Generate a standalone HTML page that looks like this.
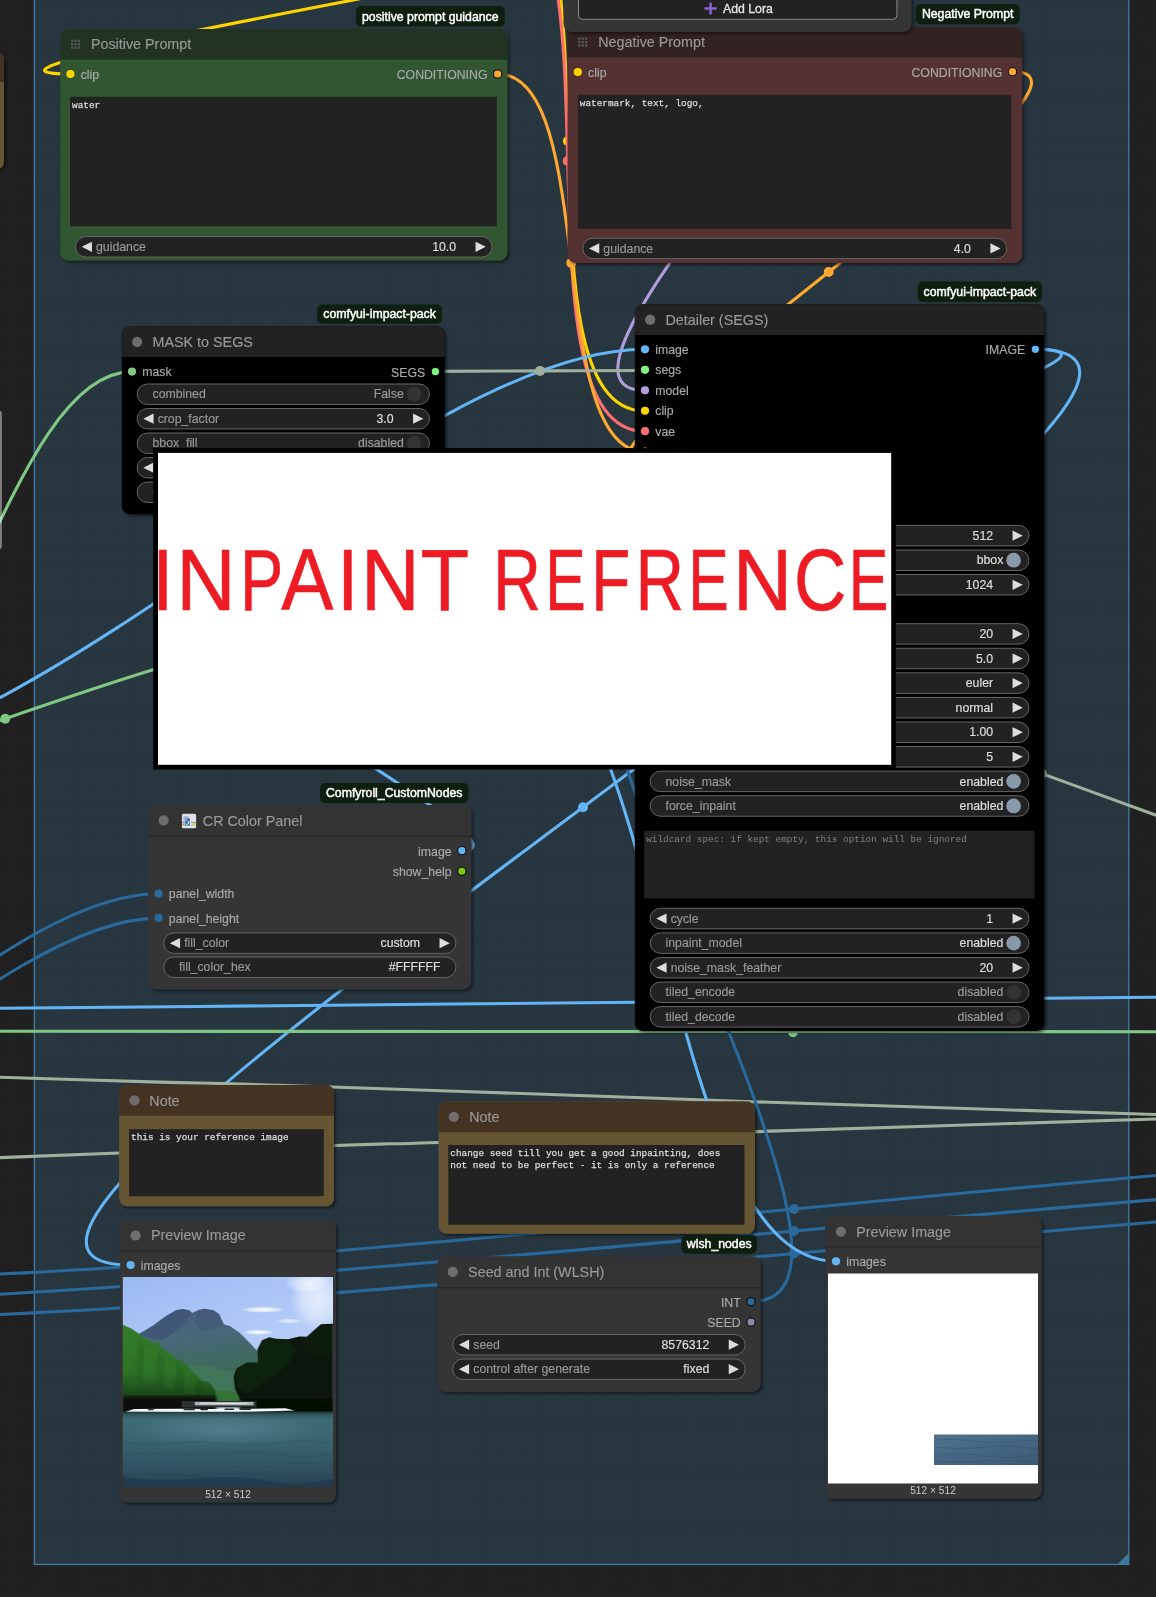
<!DOCTYPE html>
<html lang="en"><head><meta charset="utf-8"><title>ComfyUI</title>
<style>
html,body{margin:0;padding:0;background:#212121;}
body{width:1156px;height:1597px;overflow:hidden;position:relative;font-family:'Liberation Sans', Arial, sans-serif;}
svg{display:block;position:absolute;left:0;top:0;will-change:transform;}
text{white-space:pre;}
</style></head><body>
<svg width="1156" height="1597" viewBox="0 0 1156 1597">
<defs>
<filter id="sh" x="-5%" y="-5%" width="112%" height="112%"><feDropShadow dx="2" dy="2" stdDeviation="1.5" flood-color="#000" flood-opacity="0.5"/></filter>
<pattern id="grid" x="6.6" y="0.1" width="10.2" height="10.2" patternUnits="userSpaceOnUse"><rect width="10.2" height="10.2" fill="#212121"/><rect width="1" height="10.2" fill="#1e1e1e"/><rect width="10.2" height="1" fill="#1e1e1e"/></pattern>
<linearGradient id="strip" x1="0" y1="0" x2="1" y2="1"><stop offset="0" stop-color="#4f7392"/><stop offset="1" stop-color="#3c5a73"/></linearGradient>
</defs>
<rect width="1156" height="1597" fill="url(#grid)"/>

<rect x="34.4" y="-20" width="1094.4" height="1584.4" fill="#3f789e" fill-opacity="0.25" stroke="#3f789e" stroke-width="1.4"/>
<path d="M1128.8,1564.4 L1117.3,1564.4 L1128.8,1552.9 Z" fill="#3f789e"/>
<path d="M947.6,-133 C1172.9,-133 -154.9,74 70.4,74" fill="none" stroke="#FFD500" stroke-width="3.07"/>
<path d="M1012.5,71.7 C1148.4,71.7 509.1,472.3 645,472.3" fill="none" stroke="#FFA931" stroke-width="3.07"/>
<circle cx="828.7" cy="272" r="5" fill="#FFA931"/>
<path d="M490.8,-129 C631.2,-129 504.6,411 645,411" fill="none" stroke="#FFD500" stroke-width="3.07"/>
<circle cx="567.9" cy="141" r="5" fill="#FFD500"/>
<path d="M490.4,-109.4 C631,-109.4 504.4,431.4 645,431.4" fill="none" stroke="#FF6E6E" stroke-width="3.07"/>
<circle cx="567.7" cy="161" r="5" fill="#FF6E6E"/>
<path d="M497.7,74 C599.1,74 543.6,451.8 645,451.8" fill="none" stroke="#FFA931" stroke-width="3.07"/>
<circle cx="571.3" cy="262.9" r="5" fill="#FFA931"/>
<path d="M935.9,-183 C1096.7,-183 484.2,390.5 645,390.5" fill="none" stroke="#B39DDB" stroke-width="3.07"/>
<path d="M1035.4,349.3 C1257.5,349.3 -22.1,651 200,651" fill="none" stroke="#64B5F6" stroke-width="3.07"/>
<path d="M-188.4,757.6 C43.6,757.6 413,349.3 645,349.3" fill="none" stroke="#64B5F6" stroke-width="3.07"/>
<path d="M435,371.4 C452.5,371.32 505,371.05 540,370.9 C575,370.75 627.5,370.57 645,370.5" fill="none" stroke="#9FB09D" stroke-width="3.07" stroke-linecap="butt"/>
<circle cx="540" cy="370.9" r="5" fill="#9FB09D"/>
<path d="M-177,766.4 C-51.7,766.4 6.7,371.6 132,371.6" fill="none" stroke="#81C784" stroke-width="3.07"/>
<path d="M-335.6,805.9 C-159.7,805.9 170.1,631.5 346,631.5" fill="none" stroke="#81C784" stroke-width="3.07"/>
<circle cx="5.2" cy="718.7" r="5" fill="#81C784"/>
<path d="M1035.4,349.3 C1357.2,349.3 -191.2,1265 130.6,1265" fill="none" stroke="#64B5F6" stroke-width="3.07"/>
<circle cx="583" cy="807.2" r="5" fill="#64B5F6"/>
<path d="M461.8,850.6 C547.5,850.6 114.3,629 200,629" fill="none" stroke="#64B5F6" stroke-width="3.07"/>
<path d="M-5,1008.3 C50.83,1007.78 223.42,1006.22 330,1005.2 C436.58,1004.18 515.33,1003.35 634.5,1002.2 C753.67,1001.05 957.42,999.13 1045,998.3 C1132.58,997.47 1140.83,997.38 1160,997.2" fill="none" stroke="#64B5F6" stroke-width="3.07" stroke-linecap="butt"/>
<path d="M-5,1031.3 C189.17,1031.37 965.83,1031.63 1160,1031.7" fill="none" stroke="#81C784" stroke-width="3.07" stroke-linecap="butt"/>
<circle cx="793" cy="1032.2" r="5" fill="#81C784"/>
<path d="M-5,1077.1 C22.5,1077.93 112.58,1080.73 160,1082.1 C207.42,1083.47 197.83,1082.65 279.5,1085.3 C361.17,1087.95 571.32,1095.27 650,1098 C728.68,1100.73 666.6,1098.92 751.6,1101.7 C836.6,1104.48 1091.93,1112.53 1160,1114.7" fill="none" stroke="#9FB09D" stroke-width="3.07" stroke-linecap="butt"/>
<path d="M-5,1157.8 C15.62,1157 62.2,1155.05 118.7,1153 C175.2,1150.95 288.78,1147.03 334,1145.5 C379.22,1143.97 372.67,1144.3 390,1143.8 C407.33,1143.3 377,1144.53 438,1142.5 C499,1140.47 635.67,1135.53 756,1131.6 C876.33,1127.67 1092.67,1121.02 1160,1118.9" fill="none" stroke="#9FB09D" stroke-width="3.07" stroke-linecap="butt"/>
<path d="M-467.2,1244.2 C-287.9,1244.2 -20.7,893.8 158.6,893.8" fill="none" stroke="#29699C" stroke-width="3.07"/>
<path d="M-423.6,1224.8 C-259,1224.8 -5.9,918.1 158.6,918.1" fill="none" stroke="#29699C" stroke-width="3.07"/>
<path d="M751,1301.7 C926.2,1301.7 469.8,609 645,609" fill="none" stroke="#29699C" stroke-width="3.07"/>
<path d="M-188.4,1279.3 C304.1,1279.3 1283.9,1138.7 1776.4,1138.7" fill="none" stroke="#29699C" stroke-width="3.07"/>
<circle cx="794" cy="1209" r="5" fill="#29699C"/>
<path d="M-332.6,1306 C232,1306 1356,1156 1920.6,1156" fill="none" stroke="#29699C" stroke-width="3.07"/>
<circle cx="794" cy="1231" r="5" fill="#29699C"/>
<path d="M-195.8,1319.8 C300.2,1319.8 1287.8,1187.2 1783.8,1187.2" fill="none" stroke="#29699C" stroke-width="3.07"/>
<circle cx="794" cy="1253.5" r="5" fill="#29699C"/>
<path d="M1025,767 C1027.83,768.1 1038.72,772.33 1042,773.6 C1045.28,774.87 1025.7,767.67 1044.7,774.6 C1063.7,781.53 1135.12,807.58 1156,815.2 C1176.88,822.82 1167.67,819.45 1170,820.3" fill="none" stroke="#9FB09D" stroke-width="3.07" stroke-linecap="butt"/>
<circle cx="1042" cy="773.8" r="5" fill="#9FB09D"/>
<path d="M487.5,626 C668.7,626 654.8,1261.3 836,1261.3" fill="none" stroke="#64B5F6" stroke-width="3.07"/>
<g filter="url(#sh)"><path d="M-51.81,51.4 H-4.19 A8.19,8.19 0 0 1 4,59.59 V161.81 A8.19,8.19 0 0 1 -4.19,170 H-51.81 A8.19,8.19 0 0 1 -60,161.81 V59.59 A8.19,8.19 0 0 1 -51.81,51.4 Z" fill="#665533"/></g>
<path d="M-51.81,51.4 H-4.19 A8.19,8.19 0 0 1 4,59.59 V82.12 H-60 V59.59 A8.19,8.19 0 0 1 -51.81,51.4 Z" fill="#443322"/>
<rect x="-10" y="410.8" width="11.9" height="138.2" rx="2.5" fill="#fff" fill-opacity="0.42"/>
<g filter="url(#sh)"><path d="M68.39,29 H499.11 A8.19,8.19 0 0 1 507.3,37.19 V252.43 A8.19,8.19 0 0 1 499.11,260.62 H68.39 A8.19,8.19 0 0 1 60.2,252.43 V37.19 A8.19,8.19 0 0 1 68.39,29 Z" fill="#335533"/></g>
<path d="M68.39,29 H499.11 A8.19,8.19 0 0 1 507.3,37.19 V59.72 H60.2 V37.19 A8.19,8.19 0 0 1 68.39,29 Z" fill="#223322"/>
<rect x="70.96" y="39.76" width="2.2" height="2.2" fill="#5a5a5a"/>
<rect x="70.96" y="43.16" width="2.2" height="2.2" fill="#5a5a5a"/>
<rect x="70.96" y="46.56" width="2.2" height="2.2" fill="#5a5a5a"/>
<rect x="74.36" y="39.76" width="2.2" height="2.2" fill="#5a5a5a"/>
<rect x="74.36" y="43.16" width="2.2" height="2.2" fill="#5a5a5a"/>
<rect x="74.36" y="46.56" width="2.2" height="2.2" fill="#5a5a5a"/>
<rect x="77.76" y="39.76" width="2.2" height="2.2" fill="#5a5a5a"/>
<rect x="77.76" y="43.16" width="2.2" height="2.2" fill="#5a5a5a"/>
<rect x="77.76" y="46.56" width="2.2" height="2.2" fill="#5a5a5a"/>
<text x="90.92" y="49.48" font-family="'Liberation Sans', Arial, sans-serif" font-size="14.34" fill="#999" stroke="#999" stroke-width="0.15">Positive Prompt</text>
<circle cx="70.4" cy="74" r="4.1" fill="#FFD500"/>
<text x="80.64" y="78.7" font-family="'Liberation Sans', Arial, sans-serif" font-size="12.29" fill="#AAA" stroke="#AAA" stroke-width="0.15">clip</text>
<circle cx="497.7" cy="74" r="4.1" fill="#FFA931" stroke="#000" stroke-width="1"/>
<text x="487.46" y="79.1" text-anchor="end" font-family="'Liberation Sans', Arial, sans-serif" font-size="12.29" fill="#AAA" stroke="#AAA" stroke-width="0.15">CONDITIONING</text>
<rect x="70" y="96.8" width="426.8" height="129.5" fill="#222"/>
<text x="72" y="107.7" font-family="'Liberation Mono', 'DejaVu Sans Mono', monospace" font-size="9.4" fill="#ddd" stroke="#ddd" stroke-width="0.25" xml:space="preserve">water</text>
<rect x="75.56" y="236.6" width="416.38" height="20.48" rx="10.24" fill="#222" stroke="#666" stroke-width="1"/>
<path d="M91.94,241.72 L81.7,246.84 L91.94,251.96 Z" fill="#DDD"/>
<path d="M475.56,241.72 L485.8,246.84 L475.56,251.96 Z" fill="#DDD"/>
<text x="96.04" y="250.94" font-family="'Liberation Sans', Arial, sans-serif" font-size="12.29" fill="#999" stroke="#999" stroke-width="0.15">guidance</text>
<text x="456.1" y="250.94" text-anchor="end" font-family="'Liberation Sans', Arial, sans-serif" font-size="12.29" fill="#DDD" stroke="#DDD" stroke-width="0.2">10.0</text>
<rect x="355.8" y="6" width="149" height="20.6" rx="5" fill="#0F1F0F"/>
<text x="430.3" y="20.7" text-anchor="middle" font-family="'Liberation Sans', Arial, sans-serif" font-size="12.29" fill="#fff" stroke="#fff" stroke-width="0.45">positive prompt guidance</text>
<g filter="url(#sh)"><path d="M575.69,26.8 H1013.91 A8.19,8.19 0 0 1 1022.1,34.99 V254.73 A8.19,8.19 0 0 1 1013.91,262.92 H575.69 A8.19,8.19 0 0 1 567.5,254.73 V34.99 A8.19,8.19 0 0 1 575.69,26.8 Z" fill="#553333"/></g>
<path d="M575.69,26.8 H1013.91 A8.19,8.19 0 0 1 1022.1,34.99 V57.52 H567.5 V34.99 A8.19,8.19 0 0 1 575.69,26.8 Z" fill="#332222"/>
<rect x="578.26" y="37.56" width="2.2" height="2.2" fill="#5a5a5a"/>
<rect x="578.26" y="40.96" width="2.2" height="2.2" fill="#5a5a5a"/>
<rect x="578.26" y="44.36" width="2.2" height="2.2" fill="#5a5a5a"/>
<rect x="581.66" y="37.56" width="2.2" height="2.2" fill="#5a5a5a"/>
<rect x="581.66" y="40.96" width="2.2" height="2.2" fill="#5a5a5a"/>
<rect x="581.66" y="44.36" width="2.2" height="2.2" fill="#5a5a5a"/>
<rect x="585.06" y="37.56" width="2.2" height="2.2" fill="#5a5a5a"/>
<rect x="585.06" y="40.96" width="2.2" height="2.2" fill="#5a5a5a"/>
<rect x="585.06" y="44.36" width="2.2" height="2.2" fill="#5a5a5a"/>
<text x="598.22" y="47.28" font-family="'Liberation Sans', Arial, sans-serif" font-size="14.34" fill="#999" stroke="#999" stroke-width="0.15">Negative Prompt</text>
<circle cx="577.8" cy="72" r="4.1" fill="#FFD500"/>
<text x="588.04" y="76.7" font-family="'Liberation Sans', Arial, sans-serif" font-size="12.29" fill="#AAA" stroke="#AAA" stroke-width="0.15">clip</text>
<circle cx="1012.5" cy="71.7" r="4.1" fill="#FFA931" stroke="#000" stroke-width="1"/>
<text x="1002.26" y="76.8" text-anchor="end" font-family="'Liberation Sans', Arial, sans-serif" font-size="12.29" fill="#AAA" stroke="#AAA" stroke-width="0.15">CONDITIONING</text>
<rect x="577.8" y="94.8" width="433.5" height="134.1" fill="#222"/>
<text x="579.8" y="105.7" font-family="'Liberation Mono', 'DejaVu Sans Mono', monospace" font-size="9.4" fill="#ddd" stroke="#ddd" stroke-width="0.25" xml:space="preserve">watermark, text, logo,</text>
<rect x="582.86" y="238.2" width="423.88" height="20.48" rx="10.24" fill="#222" stroke="#666" stroke-width="1"/>
<path d="M599.24,243.32 L589,248.44 L599.24,253.56 Z" fill="#DDD"/>
<path d="M990.36,243.32 L1000.6,248.44 L990.36,253.56 Z" fill="#DDD"/>
<text x="603.34" y="252.54" font-family="'Liberation Sans', Arial, sans-serif" font-size="12.29" fill="#999" stroke="#999" stroke-width="0.15">guidance</text>
<text x="970.9" y="252.54" text-anchor="end" font-family="'Liberation Sans', Arial, sans-serif" font-size="12.29" fill="#DDD" stroke="#DDD" stroke-width="0.2">4.0</text>
<rect x="915.7" y="4" width="103.9" height="20.3" rx="5" fill="#0F1F0F"/>
<text x="967.65" y="18.4" text-anchor="middle" font-family="'Liberation Sans', Arial, sans-serif" font-size="12.29" fill="#fff" stroke="#fff" stroke-width="0.45">Negative Prompt</text>
<g filter="url(#sh)"><path d="M571.69,-60 H903.21 A8.19,8.19 0 0 1 911.4,-51.81 V23.71 A8.19,8.19 0 0 1 903.21,31.9 H571.69 A8.19,8.19 0 0 1 563.5,23.71 V-51.81 A8.19,8.19 0 0 1 571.69,-60 Z" fill="#353535"/></g>
<rect x="578.5" y="-10" width="318.4" height="29.3" rx="4" fill="#222" stroke="#8a8a8a" stroke-width="1"/>
<path d="M710.6,2.4 V14.6 M704.5,8.5 H716.7" stroke="#8a63d2" stroke-width="2.4" fill="none"/>
<text x="723" y="12.8" font-family="'Liberation Sans', Arial, sans-serif" font-size="12.29" fill="#e6e6e6" stroke="#e6e6e6" stroke-width="0.3">Add Lora</text>
<g filter="url(#sh)"><path d="M129.99,326.4 H436.61 A8.19,8.19 0 0 1 444.8,334.59 V506.03 A8.19,8.19 0 0 1 436.61,514.22 H129.99 A8.19,8.19 0 0 1 121.8,506.03 V334.59 A8.19,8.19 0 0 1 129.99,326.4 Z" fill="#000"/></g>
<path d="M129.99,326.4 H436.61 A8.19,8.19 0 0 1 444.8,334.59 V357.12 H121.8 V334.59 A8.19,8.19 0 0 1 129.99,326.4 Z" fill="#222"/>
<circle cx="137.16" cy="341.76" r="5.12" fill="#6e6e6e"/>
<text x="152.52" y="346.88" font-family="'Liberation Sans', Arial, sans-serif" font-size="14.34" fill="#999" stroke="#999" stroke-width="0.15">MASK to SEGS</text>
<circle cx="132" cy="371.6" r="4.1" fill="#81C784"/>
<text x="142.24" y="376.3" font-family="'Liberation Sans', Arial, sans-serif" font-size="12.29" fill="#AAA" stroke="#AAA" stroke-width="0.15">mask</text>
<circle cx="435.4" cy="371.6" r="4.1" fill="#7CF77C" stroke="#000" stroke-width="1"/>
<text x="425.16" y="376.7" text-anchor="end" font-family="'Liberation Sans', Arial, sans-serif" font-size="12.29" fill="#AAA" stroke="#AAA" stroke-width="0.15">SEGS</text>
<rect x="137.16" y="384" width="292.28" height="20.48" rx="10.24" fill="#222" stroke="#666" stroke-width="1"/>
<text x="152.52" y="398.34" font-family="'Liberation Sans', Arial, sans-serif" font-size="12.29" fill="#999" stroke="#999" stroke-width="0.15">combined</text>
<circle cx="414.08" cy="394.24" r="7.37" fill="#333"/>
<text x="403.84" y="398.34" text-anchor="end" font-family="'Liberation Sans', Arial, sans-serif" font-size="12.29" fill="#999" stroke="#999" stroke-width="0.2">False</text>
<rect x="137.16" y="408.5" width="292.28" height="20.48" rx="10.24" fill="#222" stroke="#666" stroke-width="1"/>
<path d="M153.54,413.62 L143.3,418.74 L153.54,423.86 Z" fill="#DDD"/>
<path d="M413.06,413.62 L423.3,418.74 L413.06,423.86 Z" fill="#DDD"/>
<text x="157.64" y="422.84" font-family="'Liberation Sans', Arial, sans-serif" font-size="12.29" fill="#999" stroke="#999" stroke-width="0.15">crop_factor</text>
<text x="393.6" y="422.84" text-anchor="end" font-family="'Liberation Sans', Arial, sans-serif" font-size="12.29" fill="#DDD" stroke="#DDD" stroke-width="0.2">3.0</text>
<rect x="137.16" y="433" width="292.28" height="20.48" rx="10.24" fill="#222" stroke="#666" stroke-width="1"/>
<text x="152.52" y="447.34" font-family="'Liberation Sans', Arial, sans-serif" font-size="12.29" fill="#999" stroke="#999" stroke-width="0.15">bbox_fill</text>
<circle cx="414.08" cy="443.24" r="7.37" fill="#333"/>
<text x="403.84" y="447.34" text-anchor="end" font-family="'Liberation Sans', Arial, sans-serif" font-size="12.29" fill="#999" stroke="#999" stroke-width="0.2">disabled</text>
<rect x="137.16" y="457.5" width="292.28" height="20.48" rx="10.24" fill="#222" stroke="#666" stroke-width="1"/>
<path d="M153.54,462.62 L143.3,467.74 L153.54,472.86 Z" fill="#DDD"/>
<path d="M413.06,462.62 L423.3,467.74 L413.06,472.86 Z" fill="#DDD"/>
<text x="157.64" y="471.84" font-family="'Liberation Sans', Arial, sans-serif" font-size="12.29" fill="#999" stroke="#999" stroke-width="0.15">drop_size</text>
<text x="393.6" y="471.84" text-anchor="end" font-family="'Liberation Sans', Arial, sans-serif" font-size="12.29" fill="#DDD" stroke="#DDD" stroke-width="0.2">10</text>
<rect x="137.16" y="482" width="292.28" height="20.48" rx="10.24" fill="#222" stroke="#666" stroke-width="1"/>
<text x="152.52" y="496.34" font-family="'Liberation Sans', Arial, sans-serif" font-size="12.29" fill="#999" stroke="#999" stroke-width="0.15">contour_fill</text>
<circle cx="414.08" cy="492.24" r="7.37" fill="#333"/>
<text x="403.84" y="496.34" text-anchor="end" font-family="'Liberation Sans', Arial, sans-serif" font-size="12.29" fill="#999" stroke="#999" stroke-width="0.2">disabled</text>
<rect x="317.2" y="304.4" width="124.8" height="19.3" rx="5" fill="#0F1F0F"/>
<text x="379.6" y="317.8" text-anchor="middle" font-family="'Liberation Sans', Arial, sans-serif" font-size="12.29" fill="#fff" stroke="#fff" stroke-width="0.45">comfyui-impact-pack</text>
<g filter="url(#sh)"><path d="M642.99,304.2 H1036.11 A8.19,8.19 0 0 1 1044.3,312.39 V1022.93 A8.19,8.19 0 0 1 1036.11,1031.12 H642.99 A8.19,8.19 0 0 1 634.8,1022.93 V312.39 A8.19,8.19 0 0 1 642.99,304.2 Z" fill="#000"/></g>
<path d="M642.99,304.2 H1036.11 A8.19,8.19 0 0 1 1044.3,312.39 V334.92 H634.8 V312.39 A8.19,8.19 0 0 1 642.99,304.2 Z" fill="#222"/>
<circle cx="650.16" cy="319.56" r="5.12" fill="#6e6e6e"/>
<text x="665.52" y="324.68" font-family="'Liberation Sans', Arial, sans-serif" font-size="14.34" fill="#999" stroke="#999" stroke-width="0.15">Detailer (SEGS)</text>
<circle cx="645" cy="349.3" r="4.1" fill="#64B5F6"/>
<text x="655.24" y="354" font-family="'Liberation Sans', Arial, sans-serif" font-size="12.29" fill="#AAA" stroke="#AAA" stroke-width="0.15">image</text>
<circle cx="645" cy="369.78" r="4.1" fill="#7CF77C"/>
<text x="655.24" y="374.48" font-family="'Liberation Sans', Arial, sans-serif" font-size="12.29" fill="#AAA" stroke="#AAA" stroke-width="0.15">segs</text>
<circle cx="645" cy="390.26" r="4.1" fill="#B39DDB"/>
<text x="655.24" y="394.96" font-family="'Liberation Sans', Arial, sans-serif" font-size="12.29" fill="#AAA" stroke="#AAA" stroke-width="0.15">model</text>
<circle cx="645" cy="410.74" r="4.1" fill="#FFD500"/>
<text x="655.24" y="415.44" font-family="'Liberation Sans', Arial, sans-serif" font-size="12.29" fill="#AAA" stroke="#AAA" stroke-width="0.15">clip</text>
<circle cx="645" cy="431.22" r="4.1" fill="#FF6E6E"/>
<text x="655.24" y="435.92" font-family="'Liberation Sans', Arial, sans-serif" font-size="12.29" fill="#AAA" stroke="#AAA" stroke-width="0.15">vae</text>
<circle cx="645" cy="451.7" r="4.1" fill="#FFA931"/>
<text x="655.24" y="457.3" font-family="'Liberation Sans', Arial, sans-serif" font-size="12.29" fill="#AAA" stroke="#AAA" stroke-width="0.15">positive</text>
<circle cx="645" cy="472.18" r="4.1" fill="#FFA931"/>
<text x="655.24" y="476.88" font-family="'Liberation Sans', Arial, sans-serif" font-size="12.29" fill="#AAA" stroke="#AAA" stroke-width="0.15">negative</text>
<circle cx="645" cy="492.66" r="4.1" fill="#9E9E9E"/>
<text x="655.24" y="497.36" font-family="'Liberation Sans', Arial, sans-serif" font-size="12.29" fill="#AAA" stroke="#AAA" stroke-width="0.15">sampler_opt</text>
<circle cx="1035.4" cy="349.3" r="4.1" fill="#64B5F6" stroke="#000" stroke-width="1"/>
<text x="1025.16" y="354.4" text-anchor="end" font-family="'Liberation Sans', Arial, sans-serif" font-size="12.29" fill="#AAA" stroke="#AAA" stroke-width="0.15">IMAGE</text>
<rect x="650.16" y="525.4" width="378.78" height="20.48" rx="10.24" fill="#222" stroke="#666" stroke-width="1"/>
<path d="M666.54,530.52 L656.3,535.64 L666.54,540.76 Z" fill="#DDD"/>
<path d="M1012.56,530.52 L1022.8,535.64 L1012.56,540.76 Z" fill="#DDD"/>
<text x="670.64" y="539.74" font-family="'Liberation Sans', Arial, sans-serif" font-size="12.29" fill="#999" stroke="#999" stroke-width="0.15">guide_size</text>
<text x="993.1" y="539.74" text-anchor="end" font-family="'Liberation Sans', Arial, sans-serif" font-size="12.29" fill="#DDD" stroke="#DDD" stroke-width="0.2">512</text>
<rect x="650.16" y="549.98" width="378.78" height="20.48" rx="10.24" fill="#222" stroke="#666" stroke-width="1"/>
<text x="665.52" y="564.31" font-family="'Liberation Sans', Arial, sans-serif" font-size="12.29" fill="#999" stroke="#999" stroke-width="0.15">guide_size_for</text>
<circle cx="1013.58" cy="560.22" r="7.37" fill="#8899AA"/>
<text x="1003.34" y="564.31" text-anchor="end" font-family="'Liberation Sans', Arial, sans-serif" font-size="12.29" fill="#DDD" stroke="#DDD" stroke-width="0.2">bbox</text>
<rect x="650.16" y="574.55" width="378.78" height="20.48" rx="10.24" fill="#222" stroke="#666" stroke-width="1"/>
<path d="M666.54,579.67 L656.3,584.79 L666.54,589.91 Z" fill="#DDD"/>
<path d="M1012.56,579.67 L1022.8,584.79 L1012.56,589.91 Z" fill="#DDD"/>
<text x="670.64" y="588.89" font-family="'Liberation Sans', Arial, sans-serif" font-size="12.29" fill="#999" stroke="#999" stroke-width="0.15">max_size</text>
<text x="993.1" y="588.89" text-anchor="end" font-family="'Liberation Sans', Arial, sans-serif" font-size="12.29" fill="#DDD" stroke="#DDD" stroke-width="0.2">1024</text>
<circle cx="645" cy="609.37" r="4.1" fill="#29699C"/>
<text x="655.24" y="614.07" font-family="'Liberation Sans', Arial, sans-serif" font-size="12.29" fill="#AAA" stroke="#AAA" stroke-width="0.15">seed</text>
<rect x="650.16" y="623.7" width="378.78" height="20.48" rx="10.24" fill="#222" stroke="#666" stroke-width="1"/>
<path d="M666.54,628.82 L656.3,633.94 L666.54,639.06 Z" fill="#DDD"/>
<path d="M1012.56,628.82 L1022.8,633.94 L1012.56,639.06 Z" fill="#DDD"/>
<text x="670.64" y="638.04" font-family="'Liberation Sans', Arial, sans-serif" font-size="12.29" fill="#999" stroke="#999" stroke-width="0.15">steps</text>
<text x="993.1" y="638.04" text-anchor="end" font-family="'Liberation Sans', Arial, sans-serif" font-size="12.29" fill="#DDD" stroke="#DDD" stroke-width="0.2">20</text>
<rect x="650.16" y="648.28" width="378.78" height="20.48" rx="10.24" fill="#222" stroke="#666" stroke-width="1"/>
<path d="M666.54,653.4 L656.3,658.52 L666.54,663.64 Z" fill="#DDD"/>
<path d="M1012.56,653.4 L1022.8,658.52 L1012.56,663.64 Z" fill="#DDD"/>
<text x="670.64" y="662.62" font-family="'Liberation Sans', Arial, sans-serif" font-size="12.29" fill="#999" stroke="#999" stroke-width="0.15">cfg</text>
<text x="993.1" y="662.62" text-anchor="end" font-family="'Liberation Sans', Arial, sans-serif" font-size="12.29" fill="#DDD" stroke="#DDD" stroke-width="0.2">5.0</text>
<rect x="650.16" y="672.86" width="378.78" height="20.48" rx="10.24" fill="#222" stroke="#666" stroke-width="1"/>
<path d="M666.54,677.98 L656.3,683.1 L666.54,688.22 Z" fill="#DDD"/>
<path d="M1012.56,677.98 L1022.8,683.1 L1012.56,688.22 Z" fill="#DDD"/>
<text x="670.64" y="687.19" font-family="'Liberation Sans', Arial, sans-serif" font-size="12.29" fill="#999" stroke="#999" stroke-width="0.15">sampler_name</text>
<text x="993.1" y="687.19" text-anchor="end" font-family="'Liberation Sans', Arial, sans-serif" font-size="12.29" fill="#DDD" stroke="#DDD" stroke-width="0.2">euler</text>
<rect x="650.16" y="697.43" width="378.78" height="20.48" rx="10.24" fill="#222" stroke="#666" stroke-width="1"/>
<path d="M666.54,702.55 L656.3,707.67 L666.54,712.79 Z" fill="#DDD"/>
<path d="M1012.56,702.55 L1022.8,707.67 L1012.56,712.79 Z" fill="#DDD"/>
<text x="670.64" y="711.77" font-family="'Liberation Sans', Arial, sans-serif" font-size="12.29" fill="#999" stroke="#999" stroke-width="0.15">scheduler</text>
<text x="993.1" y="711.77" text-anchor="end" font-family="'Liberation Sans', Arial, sans-serif" font-size="12.29" fill="#DDD" stroke="#DDD" stroke-width="0.2">normal</text>
<rect x="650.16" y="722.01" width="378.78" height="20.48" rx="10.24" fill="#222" stroke="#666" stroke-width="1"/>
<path d="M666.54,727.13 L656.3,732.25 L666.54,737.37 Z" fill="#DDD"/>
<path d="M1012.56,727.13 L1022.8,732.25 L1012.56,737.37 Z" fill="#DDD"/>
<text x="670.64" y="736.34" font-family="'Liberation Sans', Arial, sans-serif" font-size="12.29" fill="#999" stroke="#999" stroke-width="0.15">denoise</text>
<text x="993.1" y="736.34" text-anchor="end" font-family="'Liberation Sans', Arial, sans-serif" font-size="12.29" fill="#DDD" stroke="#DDD" stroke-width="0.2">1.00</text>
<rect x="650.16" y="746.58" width="378.78" height="20.48" rx="10.24" fill="#222" stroke="#666" stroke-width="1"/>
<path d="M666.54,751.7 L656.3,756.82 L666.54,761.94 Z" fill="#DDD"/>
<path d="M1012.56,751.7 L1022.8,756.82 L1012.56,761.94 Z" fill="#DDD"/>
<text x="670.64" y="760.92" font-family="'Liberation Sans', Arial, sans-serif" font-size="12.29" fill="#999" stroke="#999" stroke-width="0.15">feather</text>
<text x="993.1" y="760.92" text-anchor="end" font-family="'Liberation Sans', Arial, sans-serif" font-size="12.29" fill="#DDD" stroke="#DDD" stroke-width="0.2">5</text>
<rect x="650.16" y="771.16" width="378.78" height="20.48" rx="10.24" fill="#222" stroke="#666" stroke-width="1"/>
<text x="665.52" y="785.5" font-family="'Liberation Sans', Arial, sans-serif" font-size="12.29" fill="#999" stroke="#999" stroke-width="0.15">noise_mask</text>
<circle cx="1013.58" cy="781.4" r="7.37" fill="#8899AA"/>
<text x="1003.34" y="785.5" text-anchor="end" font-family="'Liberation Sans', Arial, sans-serif" font-size="12.29" fill="#DDD" stroke="#DDD" stroke-width="0.2">enabled</text>
<rect x="650.16" y="795.74" width="378.78" height="20.48" rx="10.24" fill="#222" stroke="#666" stroke-width="1"/>
<text x="665.52" y="810.07" font-family="'Liberation Sans', Arial, sans-serif" font-size="12.29" fill="#999" stroke="#999" stroke-width="0.15">force_inpaint</text>
<circle cx="1013.58" cy="805.98" r="7.37" fill="#8899AA"/>
<text x="1003.34" y="810.07" text-anchor="end" font-family="'Liberation Sans', Arial, sans-serif" font-size="12.29" fill="#DDD" stroke="#DDD" stroke-width="0.2">enabled</text>
<rect x="644.2" y="830.8" width="390.3" height="67.6" fill="#222"/>
<text x="646.2" y="841.7" font-family="'Liberation Mono', 'DejaVu Sans Mono', monospace" font-size="9.4" fill="#808080" stroke="#808080" stroke-width="0" xml:space="preserve">wildcard spec: if kept empty, this option will be ignored</text>
<rect x="650.16" y="908.3" width="378.78" height="20.48" rx="10.24" fill="#222" stroke="#666" stroke-width="1"/>
<path d="M666.54,913.42 L656.3,918.54 L666.54,923.66 Z" fill="#DDD"/>
<path d="M1012.56,913.42 L1022.8,918.54 L1012.56,923.66 Z" fill="#DDD"/>
<text x="670.64" y="922.64" font-family="'Liberation Sans', Arial, sans-serif" font-size="12.29" fill="#999" stroke="#999" stroke-width="0.15">cycle</text>
<text x="993.1" y="922.64" text-anchor="end" font-family="'Liberation Sans', Arial, sans-serif" font-size="12.29" fill="#DDD" stroke="#DDD" stroke-width="0.2">1</text>
<rect x="650.16" y="932.88" width="378.78" height="20.48" rx="10.24" fill="#222" stroke="#666" stroke-width="1"/>
<text x="665.52" y="947.21" font-family="'Liberation Sans', Arial, sans-serif" font-size="12.29" fill="#999" stroke="#999" stroke-width="0.15">inpaint_model</text>
<circle cx="1013.58" cy="943.12" r="7.37" fill="#8899AA"/>
<text x="1003.34" y="947.21" text-anchor="end" font-family="'Liberation Sans', Arial, sans-serif" font-size="12.29" fill="#DDD" stroke="#DDD" stroke-width="0.2">enabled</text>
<rect x="650.16" y="957.45" width="378.78" height="20.48" rx="10.24" fill="#222" stroke="#666" stroke-width="1"/>
<path d="M666.54,962.57 L656.3,967.69 L666.54,972.81 Z" fill="#DDD"/>
<path d="M1012.56,962.57 L1022.8,967.69 L1012.56,972.81 Z" fill="#DDD"/>
<text x="670.64" y="971.79" font-family="'Liberation Sans', Arial, sans-serif" font-size="12.29" fill="#999" stroke="#999" stroke-width="0.15">noise_mask_feather</text>
<text x="993.1" y="971.79" text-anchor="end" font-family="'Liberation Sans', Arial, sans-serif" font-size="12.29" fill="#DDD" stroke="#DDD" stroke-width="0.2">20</text>
<rect x="650.16" y="982.03" width="378.78" height="20.48" rx="10.24" fill="#222" stroke="#666" stroke-width="1"/>
<text x="665.52" y="996.36" font-family="'Liberation Sans', Arial, sans-serif" font-size="12.29" fill="#999" stroke="#999" stroke-width="0.15">tiled_encode</text>
<circle cx="1013.58" cy="992.27" r="7.37" fill="#333"/>
<text x="1003.34" y="996.36" text-anchor="end" font-family="'Liberation Sans', Arial, sans-serif" font-size="12.29" fill="#999" stroke="#999" stroke-width="0.2">disabled</text>
<rect x="650.16" y="1006.6" width="378.78" height="20.48" rx="10.24" fill="#222" stroke="#666" stroke-width="1"/>
<text x="665.52" y="1020.94" font-family="'Liberation Sans', Arial, sans-serif" font-size="12.29" fill="#999" stroke="#999" stroke-width="0.15">tiled_decode</text>
<circle cx="1013.58" cy="1016.84" r="7.37" fill="#333"/>
<text x="1003.34" y="1020.94" text-anchor="end" font-family="'Liberation Sans', Arial, sans-serif" font-size="12.29" fill="#999" stroke="#999" stroke-width="0.2">disabled</text>
<rect x="917.7" y="281.5" width="124.4" height="20.4" rx="5" fill="#0F1F0F"/>
<text x="979.9" y="296" text-anchor="middle" font-family="'Liberation Sans', Arial, sans-serif" font-size="12.29" fill="#fff" stroke="#fff" stroke-width="0.45">comfyui-impact-pack</text>
<rect x="153.2" y="448.1" width="742.6" height="321.4" fill="#000"/>
<rect x="158" y="452.9" width="733.2" height="311.9" fill="#fff"/>
<text aria-label="INPAINT REFRENCE" y="609.9" font-family="'Liberation Sans', Arial, sans-serif" font-size="87.5" fill="#ed1c24" stroke="#ed1c24" stroke-width="0.6"><tspan x="152.08" textLength="21.45" lengthAdjust="spacingAndGlyphs">I</tspan><tspan x="176.14" textLength="59.47" lengthAdjust="spacingAndGlyphs">N</tspan><tspan x="239.98" textLength="43.24" lengthAdjust="spacingAndGlyphs">P</tspan><tspan x="281.35" textLength="52.21" lengthAdjust="spacingAndGlyphs">A</tspan><tspan x="336.88" textLength="21.45" lengthAdjust="spacingAndGlyphs">I</tspan><tspan x="360.93" textLength="58.69" lengthAdjust="spacingAndGlyphs">N</tspan><tspan x="420.41" textLength="48.61" lengthAdjust="spacingAndGlyphs">T</tspan><tspan x="475" textLength="20" lengthAdjust="spacingAndGlyphs"> </tspan><tspan x="493.04" textLength="48.04" lengthAdjust="spacingAndGlyphs">R</tspan><tspan x="545.22" textLength="40.49" lengthAdjust="spacingAndGlyphs">E</tspan><tspan x="591.36" textLength="38.99" lengthAdjust="spacingAndGlyphs">F</tspan><tspan x="635.47" textLength="48.65" lengthAdjust="spacingAndGlyphs">R</tspan><tspan x="688.22" textLength="40.49" lengthAdjust="spacingAndGlyphs">E</tspan><tspan x="732.84" textLength="59.47" lengthAdjust="spacingAndGlyphs">N</tspan><tspan x="794.11" textLength="52.45" lengthAdjust="spacingAndGlyphs">C</tspan><tspan x="848.83" textLength="39.63" lengthAdjust="spacingAndGlyphs">E</tspan></text>
<g filter="url(#sh)"><path d="M156.49,805.1 H463.11 A8.19,8.19 0 0 1 471.3,813.29 V981.23 A8.19,8.19 0 0 1 463.11,989.42 H156.49 A8.19,8.19 0 0 1 148.3,981.23 V813.29 A8.19,8.19 0 0 1 156.49,805.1 Z" fill="#353535"/></g>
<path d="M156.49,805.1 H463.11 A8.19,8.19 0 0 1 471.3,813.29 V835.82 H148.3 V813.29 A8.19,8.19 0 0 1 156.49,805.1 Z" fill="#333"/>
<rect x="148.3" y="835.52" width="323" height="1.6" fill="rgba(0,0,0,0.18)"/>
<circle cx="163.66" cy="820.46" r="5.12" fill="#6e6e6e"/>
<text x="202.8" y="825.58" font-family="'Liberation Sans', Arial, sans-serif" font-size="14.34" fill="#999" stroke="#999" stroke-width="0.15">CR Color Panel</text>
<rect x="181.9" y="813.8" width="14.2" height="14.4" rx="1.6" fill="#dfe0ea"/>
<rect x="183.25" y="816.1" width="5.2" height="10" fill="#b9b5d3"/>
<rect x="185" y="818.2" width="5" height="7.8" fill="#4f8fd4"/>
<rect x="185.9" y="819.3" width="1.2" height="1.2" fill="#e8dc7a"/><rect x="187.9" y="819" width="1.3" height="1.3" fill="#1f3d6e"/><rect x="186" y="821.6" width="1.2" height="1.2" fill="#1f3d6e"/><rect x="187.9" y="821.4" width="1.2" height="2.6" fill="#e8dc7a"/><rect x="186" y="824" width="1.2" height="1.4" fill="#e8dc7a"/>
<rect x="190.9" y="821.3" width="2" height="4.9" fill="#c3c0dc"/>
<rect x="192.7" y="822.3" width="3.3" height="4" fill="#e3cf57"/><rect x="192.7" y="822.3" width="3.3" height="0.8" fill="#4f8fd4"/>
<rect x="182.1" y="822.3" width="2.2" height="3.9" fill="#e3cf57"/><rect x="182.1" y="822.3" width="2.2" height="0.8" fill="#4f8fd4"/><rect x="182.1" y="824" width="2.2" height="0.7" fill="#6d8fb5"/>
<rect x="182.1" y="826.2" width="13.8" height="1.6" fill="#e6e6f2"/>
<circle cx="461.8" cy="850.6" r="4.1" fill="#64B5F6" stroke="#000" stroke-width="1"/>
<text x="451.56" y="855.7" text-anchor="end" font-family="'Liberation Sans', Arial, sans-serif" font-size="12.29" fill="#AAA" stroke="#AAA" stroke-width="0.15">image</text>
<circle cx="461.8" cy="871.2" r="4.1" fill="#7BC618" stroke="#000" stroke-width="1"/>
<text x="451.56" y="876.3" text-anchor="end" font-family="'Liberation Sans', Arial, sans-serif" font-size="12.29" fill="#AAA" stroke="#AAA" stroke-width="0.15">show_help</text>
<circle cx="158.6" cy="893.7" r="4.1" fill="#29699C"/>
<text x="168.84" y="898.4" font-family="'Liberation Sans', Arial, sans-serif" font-size="12.29" fill="#AAA" stroke="#AAA" stroke-width="0.15">panel_width</text>
<circle cx="158.6" cy="917.9" r="4.1" fill="#29699C"/>
<text x="168.84" y="922.6" font-family="'Liberation Sans', Arial, sans-serif" font-size="12.29" fill="#AAA" stroke="#AAA" stroke-width="0.15">panel_height</text>
<rect x="163.66" y="932.9" width="292.28" height="20.48" rx="10.24" fill="#222" stroke="#666" stroke-width="1"/>
<path d="M180.04,938.02 L169.8,943.14 L180.04,948.26 Z" fill="#DDD"/>
<path d="M439.56,938.02 L449.8,943.14 L439.56,948.26 Z" fill="#DDD"/>
<text x="184.14" y="947.24" font-family="'Liberation Sans', Arial, sans-serif" font-size="12.29" fill="#999" stroke="#999" stroke-width="0.15">fill_color</text>
<text x="420.1" y="947.24" text-anchor="end" font-family="'Liberation Sans', Arial, sans-serif" font-size="12.29" fill="#DDD" stroke="#DDD" stroke-width="0.2">custom</text>
<rect x="163.66" y="957" width="292.28" height="20.48" rx="10.24" fill="#222" stroke="#666" stroke-width="1"/>
<text x="179.02" y="971.34" font-family="'Liberation Sans', Arial, sans-serif" font-size="12.29" fill="#999" stroke="#999" stroke-width="0.15">fill_color_hex</text>
<text x="440.58" y="971.34" text-anchor="end" font-family="'Liberation Sans', Arial, sans-serif" font-size="12.29" fill="#DDD" stroke="#DDD" stroke-width="0.2">#FFFFFF</text>
<rect x="320" y="783" width="148.5" height="19.9" rx="5" fill="#0F1F0F"/>
<text x="394.25" y="797" text-anchor="middle" font-family="'Liberation Sans', Arial, sans-serif" font-size="12.29" fill="#fff" stroke="#fff" stroke-width="0.45">Comfyroll_CustomNodes</text>
<g filter="url(#sh)"><path d="M127.29,1085 H325.81 A8.19,8.19 0 0 1 334,1093.19 V1198.13 A8.19,8.19 0 0 1 325.81,1206.32 H127.29 A8.19,8.19 0 0 1 119.1,1198.13 V1093.19 A8.19,8.19 0 0 1 127.29,1085 Z" fill="#665533"/></g>
<path d="M127.29,1085 H325.81 A8.19,8.19 0 0 1 334,1093.19 V1115.72 H119.1 V1093.19 A8.19,8.19 0 0 1 127.29,1085 Z" fill="#443322"/>
<circle cx="134.46" cy="1100.36" r="5.12" fill="#6e6e6e"/>
<text x="149.32" y="1106.38" font-family="'Liberation Sans', Arial, sans-serif" font-size="14.34" fill="#999" stroke="#999" stroke-width="0.15">Note</text>
<rect x="129.1" y="1129.2" width="194.7" height="67" fill="#222"/>
<text x="131.1" y="1139.7" font-family="'Liberation Mono', 'DejaVu Sans Mono', monospace" font-size="9.4" fill="#ddd" stroke="#ddd" stroke-width="0.25" xml:space="preserve">this is your reference image</text>
<g filter="url(#sh)"><path d="M446.69,1101.5 H746.81 A8.19,8.19 0 0 1 755,1109.69 V1225.63 A8.19,8.19 0 0 1 746.81,1233.82 H446.69 A8.19,8.19 0 0 1 438.5,1225.63 V1109.69 A8.19,8.19 0 0 1 446.69,1101.5 Z" fill="#665533"/></g>
<path d="M446.69,1101.5 H746.81 A8.19,8.19 0 0 1 755,1109.69 V1132.22 H438.5 V1109.69 A8.19,8.19 0 0 1 446.69,1101.5 Z" fill="#443322"/>
<circle cx="453.86" cy="1116.86" r="5.12" fill="#6e6e6e"/>
<text x="469.22" y="1121.98" font-family="'Liberation Sans', Arial, sans-serif" font-size="14.34" fill="#999" stroke="#999" stroke-width="0.15">Note</text>
<rect x="448.3" y="1145" width="296.2" height="79.7" fill="#222"/>
<text x="450.3" y="1155.5" font-family="'Liberation Mono', 'DejaVu Sans Mono', monospace" font-size="9.4" fill="#ddd" stroke="#ddd" stroke-width="0.25" xml:space="preserve">change seed till you get a good inpainting, does</text>
<text x="450.3" y="1167.7" font-family="'Liberation Mono', 'DejaVu Sans Mono', monospace" font-size="9.4" fill="#ddd" stroke="#ddd" stroke-width="0.25" xml:space="preserve">not need to be perfect - it is only a reference</text>
<g filter="url(#sh)"><path d="M128.39,1220 H327.61 A8.19,8.19 0 0 1 335.8,1228.19 V1494.43 A8.19,8.19 0 0 1 327.61,1502.62 H128.39 A8.19,8.19 0 0 1 120.2,1494.43 V1228.19 A8.19,8.19 0 0 1 128.39,1220 Z" fill="#353535"/></g>
<path d="M128.39,1220 H327.61 A8.19,8.19 0 0 1 335.8,1228.19 V1250.72 H120.2 V1228.19 A8.19,8.19 0 0 1 128.39,1220 Z" fill="#333"/>
<rect x="120.2" y="1250.42" width="215.6" height="1.6" fill="rgba(0,0,0,0.18)"/>
<circle cx="135.56" cy="1235.36" r="5.12" fill="#6e6e6e"/>
<text x="150.92" y="1240.48" font-family="'Liberation Sans', Arial, sans-serif" font-size="14.34" fill="#999" stroke="#999" stroke-width="0.15">Preview Image</text>
<circle cx="130.6" cy="1265" r="4.1" fill="#64B5F6"/>
<text x="140.84" y="1269.7" font-family="'Liberation Sans', Arial, sans-serif" font-size="12.29" fill="#AAA" stroke="#AAA" stroke-width="0.15">images</text>
<svg x="122.8" y="1277" width="210.2" height="209.6" viewBox="15 12 1125 1122" preserveAspectRatio="none">
<defs>
<linearGradient id="sky" x1="0" y1="0" x2="0.35" y2="1"><stop offset="0" stop-color="#9cb9f3"/><stop offset="0.45" stop-color="#b3cbf8"/><stop offset="0.8" stop-color="#cfdcf8"/></linearGradient>
<linearGradient id="mtn" x1="0" y1="0" x2="0.15" y2="1"><stop offset="0" stop-color="#4a5f85"/><stop offset="0.35" stop-color="#48677a"/><stop offset="0.7" stop-color="#3f6b5c"/><stop offset="1" stop-color="#3a6a52"/></linearGradient>
<linearGradient id="ltree" x1="0" y1="0" x2="0" y2="1"><stop offset="0" stop-color="#327c29"/><stop offset="0.55" stop-color="#2b6f25"/><stop offset="0.8" stop-color="#1b481a"/><stop offset="0.93" stop-color="#0a170b"/><stop offset="1" stop-color="#060c07"/></linearGradient>
<linearGradient id="water" x1="0" y1="0" x2="0" y2="1"><stop offset="0" stop-color="#2a4e50"/><stop offset="0.1" stop-color="#3f6c76"/><stop offset="0.35" stop-color="#3b6571"/><stop offset="0.7" stop-color="#315362"/><stop offset="1" stop-color="#263f50"/></linearGradient>
<radialGradient id="cloud" cx="0.5" cy="0.5" r="0.5"><stop offset="0" stop-color="#fff" stop-opacity="0.95"/><stop offset="0.6" stop-color="#fff" stop-opacity="0.6"/><stop offset="1" stop-color="#fff" stop-opacity="0"/></radialGradient>
<radialGradient id="wlight" cx="0.5" cy="0.5" r="0.5"><stop offset="0" stop-color="#7fb0c0" stop-opacity="0.3"/><stop offset="1" stop-color="#7fb0c0" stop-opacity="0"/></radialGradient>
<filter id="pb" x="-5%" y="-5%" width="110%" height="110%"><feGaussianBlur stdDeviation="3"/></filter>
<filter id="pb2" x="-10%" y="-30%" width="120%" height="160%"><feGaussianBlur stdDeviation="1.5"/></filter><filter id="pb3" x="-10%" y="-40%" width="120%" height="180%"><feGaussianBlur stdDeviation="9"/></filter>
</defs>
<rect x="0" y="0" width="1160" height="1160" fill="url(#sky)"/>
<ellipse cx="1060" cy="130" rx="150" ry="170" fill="url(#cloud)" opacity="0.7"/>
<ellipse cx="1000" cy="40" rx="120" ry="60" fill="url(#cloud)" opacity="0.6"/>
<ellipse cx="765" cy="187" rx="120" ry="17" fill="url(#cloud)"/>
<ellipse cx="905" cy="248" rx="70" ry="14" fill="url(#cloud)" opacity="0.7"/>
<ellipse cx="740" cy="308" rx="85" ry="15" fill="url(#cloud)" opacity="0.95"/>
<g filter="url(#pb)">
<path d="M90,322 L180,270 L240,225 L300,190 L335,183 L370,190 L385,205 L420,188 L450,182 L500,190 L530,210 L555,265 L590,275 L640,310 L700,370 L745,420 L770,520 L770,680 L90,680 Z" fill="url(#mtn)"/>
<path d="M300,190 L335,183 L370,190 L385,205 L340,260 L300,300 L230,350 L100,322 L180,270 L240,225 Z" fill="#394c6e" opacity="0.5"/>
<path d="M420,188 L450,182 L500,190 L530,210 L555,265 L500,290 L440,300 L400,260 Z" fill="#3d4f70" opacity="0.45"/>
<path d="M365,482 L480,490 L600,520 L640,600 L640,680 L420,680 Z" fill="#42765a"/>
<path d="M480,628 L560,622 L640,628 L660,680 L470,680 Z" fill="#357330"/>
<path d="M15,268 L60,288 L120,328 L180,368 L200,356 L215,385 L250,410 L300,448 L340,470 L370,500 L400,530 L440,568 L470,572 L490,590 L510,620 L512,700 L15,740 Z" fill="url(#ltree)"/>
<path d="M15,300 L90,340 L60,520 L15,560 Z M130,380 L200,420 L170,600 L120,560 Z M240,450 L300,480 L290,620 L230,600 Z M350,520 L400,560 L400,640 L340,630 Z" fill="#47983a" opacity="0.1"/>
<path d="M95,340 L130,380 L120,600 L90,560 Z M205,420 L240,450 L232,620 L200,600 Z M305,480 L345,520 L338,640 L300,620 Z M410,560 L440,590 L440,650 L408,645 Z" fill="#10300f" opacity="0.1"/>
<path d="M608,545 L625,500 L680,470 L740,470 L735,400 L760,350 L800,335 L830,342 L900,345 L960,330 L1000,332 L1035,300 L1075,265 L1140,262 L1140,750 L900,735 L720,700 L645,670 L615,610 Z" fill="#0a1409"/>
<path d="M625,505 L680,472 L740,472 L740,400 L765,352 L800,338 L900,348 L950,400 L900,480 L850,520 L760,580 L680,640 L620,600 Z" fill="#143316" opacity="0.45"/>
<path d="M960,335 L1000,335 L1035,302 L1075,268 L1140,265 L1140,420 L1050,440 L990,400 Z" fill="#0f2a11" opacity="0.4"/>
</g>
<rect x="15" y="652" width="500" height="80" fill="#070e08" filter="url(#pb3)"/>
<rect x="640" y="668" width="500" height="75" fill="#060b06" filter="url(#pb3)"/>
<rect x="0" y="733" width="1160" height="420" fill="url(#water)"/>
<ellipse cx="560" cy="830" rx="520" ry="90" fill="url(#wlight)"/>
<path d="M0,1160 L0,1080 Q200,1110 420,1090 T800,1105 T1160,1085 L1160,1160 Z" fill="#1c3448" opacity="0.5"/>
<g stroke="#1f3b4c" stroke-width="3" fill="none" opacity="0.35"><path d="M15,900 q140,14 280,0 t280,4 t280,-6 t290,6"/><path d="M15,960 q140,-12 280,2 t280,-4 t280,6 t290,-4"/><path d="M15,1020 q140,12 280,-2 t280,6 t280,-6 t290,6"/><path d="M15,1070 q140,-10 280,4 t280,-4 t280,6 t290,-4"/></g>
<g filter="url(#pb2)">
<rect x="330" y="676" width="400" height="34" fill="#2a3030"/>
<rect x="400" y="681" width="315" height="18" fill="#aeb3b5"/>
<rect x="430" y="686" width="255" height="5" fill="#e8ebec"/>
<path d="M30,733 L75,719 L300,717 L500,719 L700,717 L885,715 L935,726 L700,733 L300,734 Z" fill="#f6f8f9"/>
<path d="M150,722 h30 M340,722 h60 M430,722 h40 M560,720 h50 M640,720 h60" stroke="#222a2a" stroke-width="7" fill="none"/>
</g>
<rect x="15" y="733" width="1125" height="10" fill="#1c3336" opacity="0.6"/>
</svg>
<text x="228" y="1497.8" text-anchor="middle" font-family="'Liberation Sans', Arial, sans-serif" font-size="10.2" fill="#ccc">512 × 512</text>
<g filter="url(#sh)"><path d="M445.59,1256.6 H752.31 A8.19,8.19 0 0 1 760.5,1264.79 V1383.83 A8.19,8.19 0 0 1 752.31,1392.02 H445.59 A8.19,8.19 0 0 1 437.4,1383.83 V1264.79 A8.19,8.19 0 0 1 445.59,1256.6 Z" fill="#353535"/></g>
<path d="M445.59,1256.6 H752.31 A8.19,8.19 0 0 1 760.5,1264.79 V1287.32 H437.4 V1264.79 A8.19,8.19 0 0 1 445.59,1256.6 Z" fill="#333"/>
<rect x="437.4" y="1287.02" width="323.1" height="1.6" fill="rgba(0,0,0,0.18)"/>
<circle cx="452.76" cy="1271.96" r="5.12" fill="#6e6e6e"/>
<text x="468.12" y="1277.08" font-family="'Liberation Sans', Arial, sans-serif" font-size="14.34" fill="#999" stroke="#999" stroke-width="0.15">Seed and Int (WLSH)</text>
<circle cx="751" cy="1301.7" r="4.1" fill="#29699C" stroke="#000" stroke-width="1"/>
<text x="740.76" y="1306.8" text-anchor="end" font-family="'Liberation Sans', Arial, sans-serif" font-size="12.29" fill="#AAA" stroke="#AAA" stroke-width="0.15">INT</text>
<circle cx="751" cy="1322.1" r="4.1" fill="#8A88A8" stroke="#000" stroke-width="1"/>
<text x="740.76" y="1327.2" text-anchor="end" font-family="'Liberation Sans', Arial, sans-serif" font-size="12.29" fill="#AAA" stroke="#AAA" stroke-width="0.15">SEED</text>
<rect x="452.76" y="1334.5" width="292.38" height="20.48" rx="10.24" fill="#222" stroke="#666" stroke-width="1"/>
<path d="M469.14,1339.62 L458.9,1344.74 L469.14,1349.86 Z" fill="#DDD"/>
<path d="M728.76,1339.62 L739,1344.74 L728.76,1349.86 Z" fill="#DDD"/>
<text x="473.24" y="1348.84" font-family="'Liberation Sans', Arial, sans-serif" font-size="12.29" fill="#999" stroke="#999" stroke-width="0.15">seed</text>
<text x="709.3" y="1348.84" text-anchor="end" font-family="'Liberation Sans', Arial, sans-serif" font-size="12.29" fill="#DDD" stroke="#DDD" stroke-width="0.2">8576312</text>
<rect x="452.76" y="1359" width="292.38" height="20.48" rx="10.24" fill="#222" stroke="#666" stroke-width="1"/>
<path d="M469.14,1364.12 L458.9,1369.24 L469.14,1374.36 Z" fill="#DDD"/>
<path d="M728.76,1364.12 L739,1369.24 L728.76,1374.36 Z" fill="#DDD"/>
<text x="473.24" y="1373.34" font-family="'Liberation Sans', Arial, sans-serif" font-size="12.29" fill="#999" stroke="#999" stroke-width="0.15">control after generate</text>
<text x="709.3" y="1373.34" text-anchor="end" font-family="'Liberation Sans', Arial, sans-serif" font-size="12.29" fill="#DDD" stroke="#DDD" stroke-width="0.2">fixed</text>
<rect x="681.5" y="1235" width="75.5" height="18.8" rx="5" fill="#0F1F0F"/>
<text x="719.25" y="1247.9" text-anchor="middle" font-family="'Liberation Sans', Arial, sans-serif" font-size="12.29" fill="#fff" stroke="#fff" stroke-width="0.45">wlsh_nodes</text>
<g filter="url(#sh)"><path d="M833.69,1216.2 H1033.31 A8.19,8.19 0 0 1 1041.5,1224.39 V1490.63 A8.19,8.19 0 0 1 1033.31,1498.82 H833.69 A8.19,8.19 0 0 1 825.5,1490.63 V1224.39 A8.19,8.19 0 0 1 833.69,1216.2 Z" fill="#353535"/></g>
<path d="M833.69,1216.2 H1033.31 A8.19,8.19 0 0 1 1041.5,1224.39 V1246.92 H825.5 V1224.39 A8.19,8.19 0 0 1 833.69,1216.2 Z" fill="#333"/>
<rect x="825.5" y="1246.62" width="216" height="1.6" fill="rgba(0,0,0,0.18)"/>
<circle cx="840.86" cy="1231.56" r="5.12" fill="#6e6e6e"/>
<text x="856.22" y="1236.68" font-family="'Liberation Sans', Arial, sans-serif" font-size="14.34" fill="#999" stroke="#999" stroke-width="0.15">Preview Image</text>
<circle cx="836" cy="1261.3" r="4.1" fill="#64B5F6"/>
<text x="846.24" y="1266" font-family="'Liberation Sans', Arial, sans-serif" font-size="12.29" fill="#AAA" stroke="#AAA" stroke-width="0.15">images</text>
<rect x="828" y="1273.5" width="210" height="210" fill="#fff"/>
<rect x="934" y="1434.5" width="104" height="30.5" fill="url(#strip)"/>
<path d="M934,1440 q20,-2 40,1 t64,-1 M934,1447 q30,3 50,0 t54,2 M934,1455 q25,-3 52,1 t52,-2 M934,1461 q20,2 50,0 t54,1" stroke="#34506a" stroke-width="0.8" fill="none" opacity="0.6"/>
<text x="933" y="1494.2" text-anchor="middle" font-family="'Liberation Sans', Arial, sans-serif" font-size="10.2" fill="#ccc">512 × 512</text>
</svg>
</body></html>
